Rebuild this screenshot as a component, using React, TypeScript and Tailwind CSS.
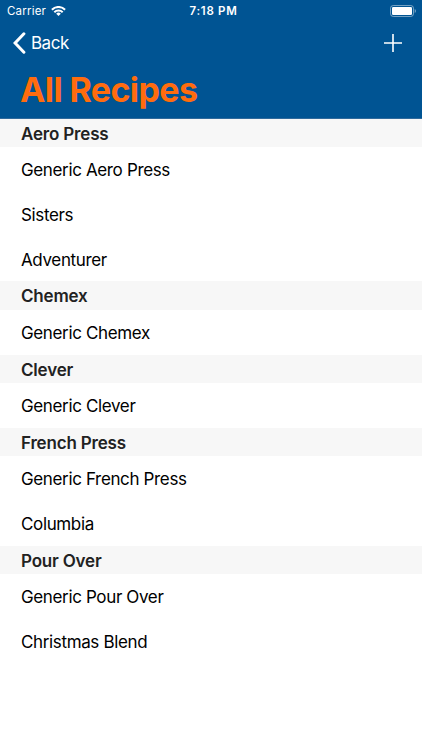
const sections = [
  { title: 'Aero Press', recipes: ['Generic Aero Press', 'Sisters', 'Adventurer'] },
  { title: 'Chemex', recipes: ['Generic Chemex'] },
  { title: 'Clever', recipes: ['Generic Clever'] },
  { title: 'French Press', recipes: ['Generic French Press', 'Columbia'] },
  { title: 'Pour Over', recipes: ['Generic Pour Over', 'Christmas Blend'] },
];

function StatusBar() {
  return (
    <div className="grid h-[22px] grid-cols-3 items-center pl-[7px] pr-[5px] text-[11.5px]">
      <div className="flex items-center gap-[5px]">
        <span className="pt-px tracking-[0.2px]">Carrier</span>
        <svg className="h-[10px] w-[15px]" viewBox="0 0 15 10" fill="none" stroke="currentColor" strokeWidth="2">
          <path d="M0.9 3.7a9.3 9.3 0 0 1 13.2 0" />
          <path d="M3.3 6.2a5.9 5.9 0 0 1 8.4 0" />
          <path d="M7.5 10 5.2 7.7a3.3 3.3 0 0 1 4.6 0z" fill="currentColor" stroke="none" />
        </svg>
      </div>
      <span className="pt-px pl-[3px] text-center font-semibold tracking-[0.7px]">7:18 PM</span>
      <svg className="-mt-px h-[12px] w-[27px] justify-self-end" viewBox="0 0 27 12">
        <rect x="0.5" y="0.5" width="23" height="11" rx="2.8" fill="none" stroke="currentColor" opacity="0.45" />
        <rect x="2" y="2" width="20" height="8" rx="1.2" fill="currentColor" />
        <path d="M24.7 4a2.2 2.2 0 0 1 0 4z" fill="currentColor" opacity="0.45" />
      </svg>
    </div>
  );
}

export default function App() {
  return (
    <div className="min-h-[750px] w-full bg-white font-['Inter',sans-serif] text-black">
      <header className="h-[118.6px] border-b border-[#2f6a9c] bg-[#005493] text-white">
        <StatusBar />
        <nav className="flex h-[42px] items-center justify-between pl-[13px] pr-5">
          <button className="flex items-center gap-[5px] text-[17px] tracking-[-0.5px]">
            <svg
              className="h-[22px] w-[13px]"
              viewBox="0 0 13 22"
              fill="none"
              stroke="currentColor"
              strokeWidth="3"
              strokeLinecap="round"
            >
              <path d="M10.9 1.8 2.1 11l8.8 9.2" />
            </svg>
            <span className="pt-[2px]">Back</span>
          </button>
          <svg className="size-[18px]" viewBox="0 0 18 18" fill="none" stroke="currentColor" strokeWidth="1.6">
            <path d="M9 0v18M0 9h18" />
          </svg>
        </nav>
        <h1 className="pl-5 text-[34px] leading-[51px] font-bold tracking-[-0.6px] text-[#ff6c0e]">
          All Recipes
        </h1>
      </header>

      <main>
        {sections.map((section) => (
          <section key={section.title}>
            <h2 className="h-[28.5px] bg-[#f7f7f7] pl-[21px] text-[17px] leading-[30px] font-semibold tracking-[-0.18px] text-[#222]">
              {section.title}
            </h2>
            <ul>
              {section.recipes.map((recipe) => (
                <li key={recipe} className="h-[44.75px] pl-[21px] text-[17px] leading-[46.4px] tracking-[-0.36px]">
                  {recipe}
                </li>
              ))}
            </ul>
          </section>
        ))}
      </main>
    </div>
  );
}
